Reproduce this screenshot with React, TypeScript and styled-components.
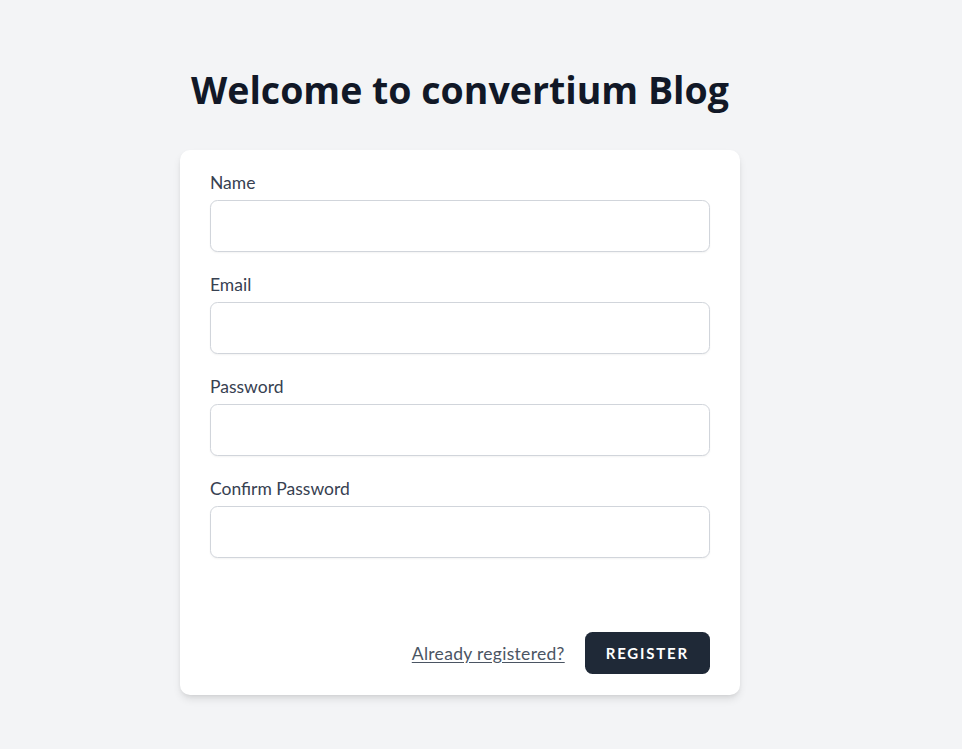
import React from "react";
import styled, { createGlobalStyle } from "styled-components";

const Global = createGlobalStyle`
  html, body { margin: 0; padding: 0; background: #f3f4f6; }
  * { box-sizing: border-box; }
  body { font-family: Lato, "Noto Sans", sans-serif; -webkit-font-smoothing: antialiased; }
`;

const Page = styled.div`
  min-height: 749px;
  display: flex;
  flex-direction: column;
  align-items: center;
  padding-top: 67px;
  padding-right: 42px;
  background: #f3f4f6;
`;

const Title = styled.h1`
  margin: 0;
  font-family: "Open Sans", Lato, sans-serif;
  font-size: 37.5px;
  line-height: 45px;
  font-weight: 700;
  color: #111827;
  text-align: center;
  white-space: nowrap;
`;

const Card = styled.form`
  width: 560px;
  margin-top: 38px;
  padding: 20px 30px 21px;
  background: #fff;
  border-radius: 10px;
  box-shadow: 0 5px 8px -1px rgba(0,0,0,0.1), 0 2px 5px -2px rgba(0,0,0,0.1);
`;

const Field = styled.div<{ $first?: boolean }>`
  margin-top: ${(p) => (p.$first ? "0" : "20px")};
`;

const Label = styled.label`
  display: block;
  font-size: 17.5px;
  line-height: 25px;
  font-weight: 400;
  color: #374151;
`;

const Input = styled.input`
  display: block;
  width: 100%;
  margin-top: 5px;
  height: 52px;
  padding: 10px 15px;
  font-size: 17.5px;
  border: 1px solid #d1d5db;
  border-radius: 7.5px;
  background: #fff;
  box-shadow: 0 1px 2px rgba(0,0,0,0.05);
  outline: none;
`;

const Actions = styled.div`
  display: flex;
  align-items: center;
  justify-content: flex-end;
  margin-top: 74px;
`;

const Link = styled.a`
  font-size: 17.5px;
  line-height: 25px;
  letter-spacing: 0.3px;
  color: #4b5563;
  text-decoration: underline;
  text-underline-offset: 2px;
  cursor: pointer;
`;

const Button = styled.button`
  margin-left: 20px;
  height: 42px;
  padding: 0 20px;
  background: #1f2937;
  color: #fff;
  border: 1px solid transparent;
  border-radius: 7.5px;
  font-family: Lato, "Noto Sans", sans-serif;
  font-size: 15px;
  font-weight: 700;
  letter-spacing: 0.12em;
  text-transform: uppercase;
`;

export default function App() {
  return (
    <Page>
      <Global />
      <Title>Welcome to convertium Blog</Title>
      <Card onSubmit={(e) => e.preventDefault()}>
        <Field $first>
          <Label htmlFor="name">Name</Label>
          <Input id="name" type="text" />
        </Field>
        <Field>
          <Label htmlFor="email">Email</Label>
          <Input id="email" type="email" />
        </Field>
        <Field>
          <Label htmlFor="password">Password</Label>
          <Input id="password" type="password" />
        </Field>
        <Field>
          <Label htmlFor="password_confirmation">Confirm Password</Label>
          <Input id="password_confirmation" type="password" />
        </Field>
        <Actions>
          <Link>Already registered?</Link>
          <Button type="submit">Register</Button>
        </Actions>
      </Card>
    </Page>
  );
}
